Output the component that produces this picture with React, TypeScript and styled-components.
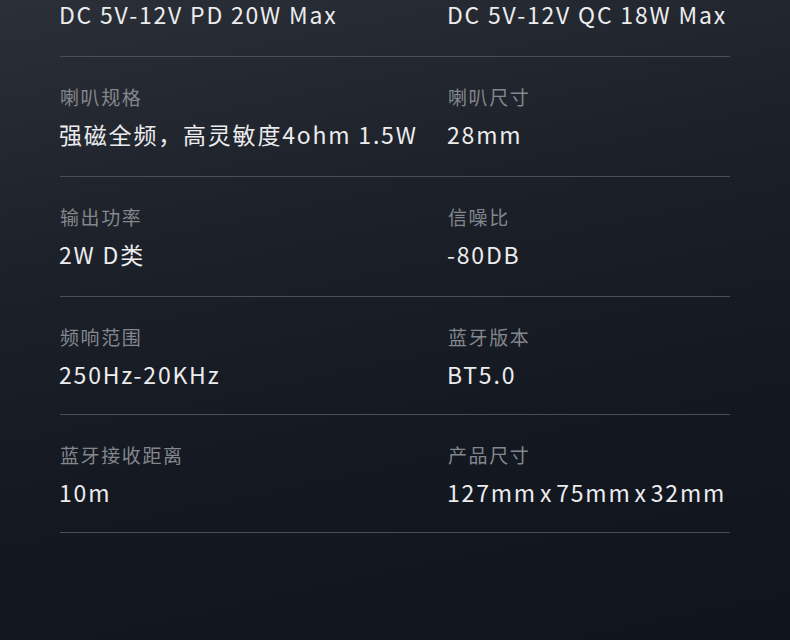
import * as React from "react";
import styled, { createGlobalStyle } from "styled-components";

const GlobalStyle = createGlobalStyle`
  html, body {
    margin: 0;
    padding: 0;
    background: #11151e;
  }
`;

const Page = styled.div`
  width: 790px;
  height: 640px;
  overflow: hidden;
  background: linear-gradient(168deg, #2b3038 0%, #1c2029 35%, #141821 65%, #10141d 100%);
  font-family: "Noto Sans CJK SC", "Noto Sans", sans-serif;
`;

const Table = styled.div`
  margin: -63px 60px 0 60px;
`;

const Row = styled.div<{ $h: number }>`
  display: grid;
  grid-template-columns: 388px 1fr;
  height: ${(p) => p.$h - 1}px;
  border-bottom: 1px solid #4a4e57;
`;

const Cell = styled.div`
  display: flex;
  flex-direction: column;
  padding-top: 27px;
`;

const Label = styled.div`
  font-size: 19px;
  line-height: 26px;
  letter-spacing: 1.6px;
  color: #84878d;
`;

const Value = styled.div`
  margin-top: 9px;
  margin-left: -1px;
  font-size: 23px;
  line-height: 30px;
  letter-spacing: 1.8px;
  color: #ececee;
  white-space: nowrap;
`;

const Times = styled.span`
  margin: 0 3px 0 3px;
`;

interface Spec {
  label: string;
  value: React.ReactNode;
}

const specs: Spec[] = [
  { label: "输入电压", value: "DC 5V-12V PD 20W Max" },
  { label: "快充协议", value: "DC 5V-12V QC 18W Max" },
  { label: "喇叭规格", value: "强磁全频，高灵敏度4ohm 1.5W" },
  { label: "喇叭尺寸", value: "28mm" },
  { label: "输出功率", value: "2W D类" },
  { label: "信噪比", value: "-80DB" },
  { label: "频响范围", value: "250Hz-20KHz" },
  { label: "蓝牙版本", value: "BT5.0" },
  { label: "蓝牙接收距离", value: "10m" },
  {
    label: "产品尺寸",
    value: (
      <>
        127mm<Times>x</Times>75mm<Times>x</Times>32mm
      </>
    ),
  },
];

// row pitch as measured in the design
const heights = [120, 120, 120, 118, 118];

const rows: Spec[][] = [];
for (let i = 0; i < specs.length; i += 2) rows.push(specs.slice(i, i + 2));

const App: React.FC = () => {
  return (
    <Page>
      <GlobalStyle />
      <Table>
        {rows.map((row, i) => (
          <Row key={i} $h={heights[i]}>
            {row.map((s) => (
              <Cell key={s.label}>
                <Label>{s.label}</Label>
                <Value>{s.value}</Value>
              </Cell>
            ))}
          </Row>
        ))}
      </Table>
    </Page>
  );
};

export default App;
